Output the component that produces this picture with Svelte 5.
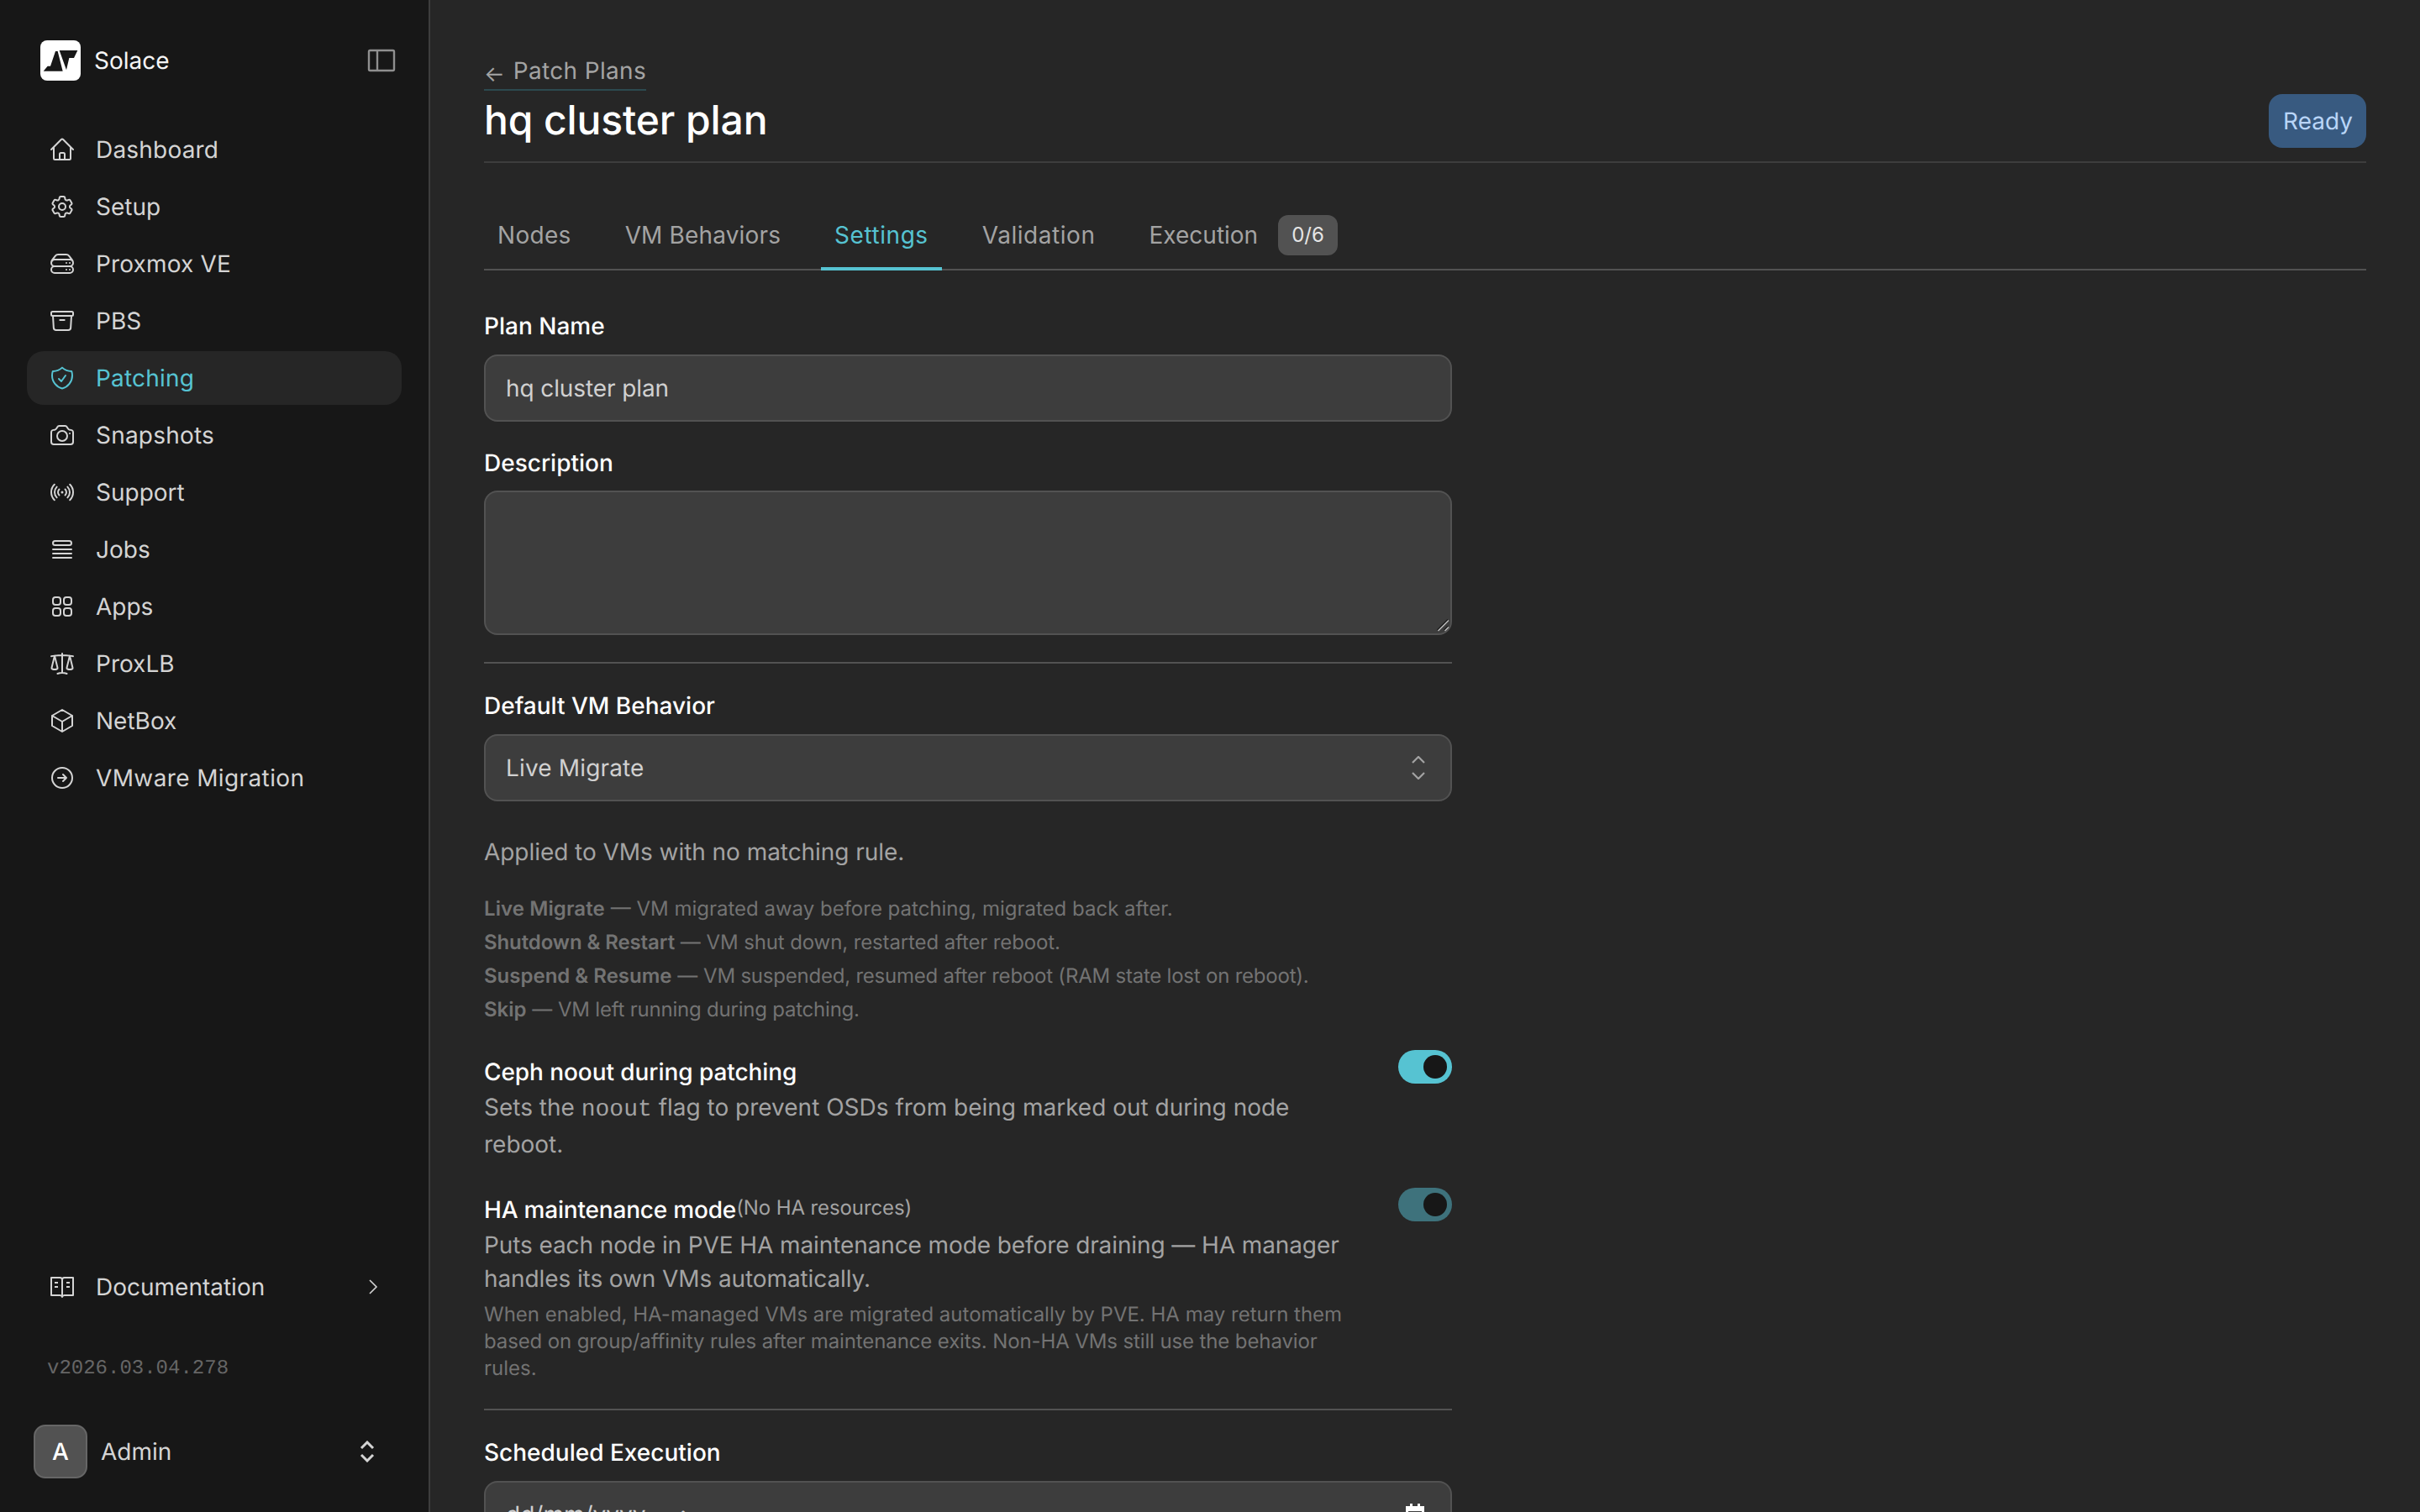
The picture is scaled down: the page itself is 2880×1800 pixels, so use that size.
<script>
  const nav = [
    { label: 'Dashboard', ls: 0.2, d: ['m2.25 12 8.954-8.955c.44-.439 1.152-.439 1.591 0L21.75 12M4.5 9.75v10.125c0 .621.504 1.125 1.125 1.125H9.75v-4.875c0-.621.504-1.125 1.125-1.125h2.25c.621 0 1.125.504 1.125 1.125V21h4.125c.621 0 1.125-.504 1.125-1.125V9.75M8.25 21h8.25'] },
    { label: 'Setup', ls: 0, d: ['M9.594 3.94c.09-.542.56-.94 1.11-.94h2.593c.55 0 1.02.398 1.11.94l.213 1.281c.063.374.313.686.645.87.074.04.147.083.22.127.325.196.72.257 1.075.124l1.217-.456a1.125 1.125 0 0 1 1.37.49l1.296 2.247a1.125 1.125 0 0 1-.26 1.431l-1.003.827c-.293.241-.438.613-.43.992a7.723 7.723 0 0 1 0 .255c-.008.378.137.75.43.991l1.004.827c.424.35.534.955.26 1.43l-1.298 2.247a1.125 1.125 0 0 1-1.369.491l-1.217-.456c-.355-.133-.75-.072-1.076.124a6.47 6.47 0 0 1-.22.128c-.331.183-.581.495-.644.869l-.213 1.281c-.09.543-.56.94-1.11.94h-2.594c-.55 0-1.019-.398-1.11-.94l-.213-1.281c-.062-.374-.312-.686-.644-.87a6.52 6.52 0 0 1-.22-.127c-.325-.196-.72-.257-1.076-.124l-1.217.456a1.125 1.125 0 0 1-1.369-.49l-1.297-2.247a1.125 1.125 0 0 1 .26-1.431l1.004-.827c.292-.24.437-.613.43-.991a6.932 6.932 0 0 1 0-.255c.007-.38-.138-.751-.43-.992l-1.004-.827a1.125 1.125 0 0 1-.26-1.43l1.297-2.247a1.125 1.125 0 0 1 1.37-.491l1.216.456c.356.133.751.072 1.076-.124.072-.044.146-.086.22-.128.332-.183.582-.495.644-.869l.214-1.28Z', 'M15 12a3 3 0 1 1-6 0 3 3 0 0 1 6 0Z'] },
    { label: 'Proxmox VE', ls: 0.15, d: ['M5.25 14.25h13.5m-13.5 0a3 3 0 0 1-3-3m3 3a3 3 0 1 0 0 6h13.5a3 3 0 1 0 0-6m-16.5-3a3 3 0 0 1 3-3h13.5a3 3 0 0 1 3 3m-19.5 0a4.5 4.5 0 0 1 .9-2.7L5.737 5.1a3.375 3.375 0 0 1 2.7-1.35h7.126c1.062 0 2.062.5 2.7 1.35l2.587 3.45a4.5 4.5 0 0 1 .9 2.7m0 0a3 3 0 0 1-3 3m0 3h.008v.008h-.008v-.008Zm0-6h.008v.008h-.008v-.008Zm-3 6h.008v.008h-.008v-.008Zm0-6h.008v.008h-.008v-.008Z'] },
    { label: 'PBS', ls: 0, d: ['m20.25 7.5-.625 10.632a2.25 2.25 0 0 1-2.247 2.118H6.622a2.25 2.25 0 0 1-2.247-2.118L3.75 7.5M10 11.25h4M3.375 7.5h17.25c.621 0 1.125-.504 1.125-1.125v-1.5c0-.621-.504-1.125-1.125-1.125H3.375c-.621 0-1.125.504-1.125 1.125v1.5c0 .621.504 1.125 1.125 1.125Z'] },
    { label: 'Patching', ls: 0.2, active: true, d: ['M9 12.75 11.25 15 15 9.75m-3-7.036A11.959 11.959 0 0 1 3.598 6 11.99 11.99 0 0 0 3 9.749c0 5.592 3.824 10.29 9 11.623 5.176-1.332 9-6.03 9-11.622 0-1.31-.21-2.571-.598-3.751h-.152c-3.196 0-6.1-1.248-8.25-3.285Z'] },
    { label: 'Snapshots', ls: 0.2, d: ['M6.827 6.175A2.31 2.31 0 0 1 5.186 7.23c-.38.054-.757.112-1.134.175C2.999 7.58 2.25 8.507 2.25 9.574V18a2.25 2.25 0 0 0 2.25 2.25h15A2.25 2.25 0 0 0 21.75 18V9.574c0-1.067-.75-1.994-1.802-2.169a47.865 47.865 0 0 0-1.134-.175 2.31 2.31 0 0 1-1.64-1.055l-.822-1.316a2.192 2.192 0 0 0-1.736-1.039 48.774 48.774 0 0 0-5.232 0 2.192 2.192 0 0 0-1.736 1.039l-.821 1.316Z', 'M16.5 12.75a4.5 4.5 0 1 1-9 0 4.5 4.5 0 0 1 9 0ZM18.75 10.5h.008v.008h-.008V10.5Z'] },
    { label: 'Support', ls: 0, d: ['M9.348 14.652a3.75 3.75 0 0 1 0-5.304m5.304 0a3.75 3.75 0 0 1 0 5.304m-7.425 2.121a6.75 6.75 0 0 1 0-9.546m9.546 0a6.75 6.75 0 0 1 0 9.546M5.106 18.894c-3.808-3.807-3.808-9.98 0-13.788m13.788 0c3.808 3.807 3.808 9.98 0 13.788M12 12h.008v.008H12V12Zm.375 0a.375.375 0 1 1-.75 0 .375.375 0 0 1 .75 0Z'] },
    { label: 'Jobs', ls: 0, d: ['M3.75 12h16.5m-16.5 3.75h16.5m-16.5 3.75h16.5M5.625 4.5h12.75a1.875 1.875 0 0 1 0 3.75H5.625a1.875 1.875 0 0 1 0-3.75Z'] },
    { label: 'Apps', ls: 0, d: ['M3.75 6A2.25 2.25 0 0 1 6 3.75h2.25A2.25 2.25 0 0 1 10.5 6v2.25a2.25 2.25 0 0 1-2.25 2.25H6a2.25 2.25 0 0 1-2.25-2.25V6ZM3.75 15.75A2.25 2.25 0 0 1 6 13.5h2.25a2.25 2.25 0 0 1 2.25 2.25V18a2.25 2.25 0 0 1-2.25 2.25H6A2.25 2.25 0 0 1 3.75 18v-2.25ZM13.5 6a2.25 2.25 0 0 1 2.25-2.25H18A2.25 2.25 0 0 1 20.25 6v2.25A2.25 2.25 0 0 1 18 10.5h-2.25a2.25 2.25 0 0 1-2.25-2.25V6ZM13.5 15.75a2.25 2.25 0 0 1 2.25-2.25H18a2.25 2.25 0 0 1 2.25 2.25V18A2.25 2.25 0 0 1 18 20.25h-2.25A2.25 2.25 0 0 1 13.5 18v-2.25Z'] },
    { label: 'ProxLB', ls: 0, d: ['M12 3v17.25m0 0c-1.472 0-2.882.265-4.185.75M12 20.25c1.472 0 2.882.265 4.185.75M18.75 4.97A48.416 48.416 0 0 0 12 4.5c-2.291 0-4.545.16-6.75.47m13.5 0c1.01.143 2.01.317 3 .52m-3-.52 2.62 10.726c.122.499-.106 1.028-.589 1.202a5.988 5.988 0 0 1-2.031.352 5.988 5.988 0 0 1-2.031-.352c-.483-.174-.711-.703-.59-1.202L18.75 4.971Zm-16.5.52c.99-.203 1.99-.377 3-.52m0 0 2.62 10.726c.122.499-.106 1.028-.589 1.202a5.989 5.989 0 0 1-2.031.352 5.989 5.989 0 0 1-2.031-.352c-.483-.174-.711-.703-.59-1.202L5.25 4.971Z'] },
    { label: 'NetBox', ls: 0, d: ['m21 7.5-9-5.25L3 7.5m18 0-9 5.25m9-5.25v9l-9 5.25M3 7.5l9 5.25M3 7.5v9l9 5.25m0-9v9'] },
    { label: 'VMware Migration', ls: 0.38, d: ['m12.75 15 3-3m0 0-3-3m3 3h-7.5M21 12a9 9 0 1 1-18 0 9 9 0 0 1 18 0Z'] }
  ];
  const tabs = [
    { t: 'Nodes', ls: 0.3 },
    { t: 'VM Behaviors', ls: 0.15 },
    { t: 'Settings', ls: 0.55 },
    { t: 'Validation', ls: 0.55 },
    { t: 'Execution', ls: 0 }
  ];
  const legend = [
    ['Live Migrate', 0.1, 'VM migrated away before patching, migrated back after.', 0],
    ['Shutdown & Restart', -0.1, 'VM shut down, restarted after reboot.', -0.12],
    ['Suspend & Resume', 0, 'VM suspended, resumed after reboot (RAM state lost on reboot).', -0.22],
    ['Skip', 0, 'VM left running during patching.', -0.22]
  ];
</script>

<div class="shell">
  <aside class="sidebar">
    <div class="brand">
      <svg class="logo" viewBox="144 144 144 144" aria-hidden="true">
        <rect x="144" y="144" width="144" height="144" rx="24" fill="#fff" />
        <path d="M155 254 L170 236 L180 236 L198 183 L206 183 L224 254 Z" fill="#171717" />
        <path d="M212 180 L277 180 L264 207 L247 207 L237 250 Z" fill="#171717" />
      </svg>
      <span class="brand-name">Solace</span>
      <svg class="panel" viewBox="0 0 36 32" fill="none" stroke="#8f8f8f" stroke-width="2.4" aria-hidden="true">
        <rect x="3" y="4" width="30" height="24" rx="1.5" />
        <path d="M13 4v24" />
      </svg>
    </div>

    <nav class="nav">
      {#each nav as item}
        <a class="nav-item" class:active={item.active} href="#top">
          <svg class="icon" viewBox="0 0 24 24" fill="none" stroke="currentColor" stroke-width="1.5" stroke-linecap="round" stroke-linejoin="round" aria-hidden="true">
            {#each item.d as d}<path {d} />{/each}
          </svg>
          <span style:letter-spacing="{item.ls}px">{item.label}</span>
        </a>
      {/each}
    </nav>

    <a class="nav-item docs" href="#top">
      <svg class="icon" viewBox="0 0 32 32" fill="none" stroke="currentColor" stroke-width="2" stroke-linejoin="round" aria-hidden="true">
        <path d="M3 5h10.500c1.500 0 2.500 1 2.500 2.500C16 6 17 5 18.500 5H29v21H18.500c-1 0-2 .6-2.500 2-.5-1.400-1.500-2-2.500-2H3Z" />
        <path d="M16 7.500V28M7 11h4M7 16h4M21 11h4M21 16h4" />
      </svg>
      <span>Documentation</span>
      <svg class="chev" viewBox="0 0 12 20" fill="none" stroke="currentColor" stroke-width="1.6" aria-hidden="true"><path d="m2 2 8 8-8 8" /></svg>
    </a>

    <div class="version">v2026.03.04.278</div>

    <div class="user">
      <div class="avatar">A</div>
      <span class="user-name">Admin</span>
      <svg class="updown" viewBox="0 0 18 26" fill="none" stroke="currentColor" stroke-width="3" aria-hidden="true"><path d="m2 9 7-7 7 7M2 17l7 7 7-7" /></svg>
    </div>
  </aside>

  <main class="main">
    <header class="head">
      <div>
        <a class="back" href="#top"><span class="arrow">←</span><span class="back-text">Patch Plans</span></a>
        <h1>hq cluster plan</h1>
      </div>
      <span class="status">Ready</span>
    </header>

    <div class="tabs">
      {#each tabs as tab}
        <button class="tab" class:on={tab.t === 'Settings'}>
          <span style:letter-spacing="{tab.ls}px">{tab.t}</span>
          {#if tab.t === 'Execution'}<span class="count">0/6</span>{/if}
        </button>
      {/each}
    </div>

    <form class="form">
      <label class="label first" for="pn">Plan Name</label>
      <input id="pn" class="field plan" value="hq cluster plan" />

      <label class="label desc-label" for="ds">Description</label>
      <div class="area-wrap">
        <textarea id="ds" class="field area"></textarea>
        <svg class="grip" viewBox="0 0 16 16" aria-hidden="true" fill="none" stroke-width="1.500">
          <path d="M0.500 13 L13 0.500" stroke="#1c1c1c" />
          <path d="M1.500 14 L14 1.500" stroke="#bdbdbd" />
          <path d="M8.500 13 L13 8.500" stroke="#1c1c1c" />
          <path d="M9.500 14 L14 9.500" stroke="#bdbdbd" />
        </svg>
      </div>

      <hr class="rule one" />

      <div class="label">Default VM Behavior</div>
      <div class="field select">
        <span class="sel-text">Live Migrate</span>
        <svg viewBox="0 0 18 28" width="18" height="28" fill="none" stroke="#a3a3a3" stroke-width="2.200" aria-hidden="true"><path d="m2 8 7-7 7 7M2 20l7 7 7-7" /></svg>
      </div>

      <p class="hint">Applied to VMs with no matching rule.</p>

      <div class="legend">
        {#each legend as [k, kls, v, vls]}
          <div><strong style:letter-spacing="{kls}px">{k}</strong> — <span style:letter-spacing="{vls}px">{v}</span></div>
        {/each}
      </div>

      <div class="toggle-row ceph">
        <div class="toggle-text">
          <div class="toggle-title ceph-title">Ceph noout during patching</div>
          <p class="toggle-desc">Sets the <code>noout</code> flag to prevent OSDs from being marked out during node reboot.</p>
        </div>
        <span class="switch"></span>
      </div>

      <div class="toggle-row ha">
        <div class="toggle-text">
          <div class="toggle-title ha-title"><span class="ha-name">HA maintenance mode</span><span class="note">(No HA resources)</span></div>
          <p class="toggle-desc">Puts each node in PVE HA maintenance mode before draining — HA manager handles its own VMs automatically.</p>
          <p class="fine">When enabled, HA-managed VMs are migrated automatically by PVE. HA may return them <span class="tight">based on group/affinity rules after maintenance exits. Non-HA VMs still use the behavior</span> rules.</p>
        </div>
        <span class="switch dim"></span>
      </div>

      <hr class="rule two" />

      <div class="label">Scheduled Execution</div>
      <div class="field date">
        <span>dd/mm/yyyy, --:--</span>
        <svg viewBox="0 0 22 26" width="22" height="28" fill="#fff" aria-hidden="true"><path d="M5 0h3v3h6V0h3v3h5v23H0V3h5Zm-2 9v14h16V9Z" /></svg>
      </div>
    </form>
  </main>
</div>

<style>
  :global(body) {
    margin: 0;
    background: #262626;
  }
  .shell {
    display: flex;
    height: 1800px;
    overflow: hidden;
    font-family: Inter, "Noto Sans", sans-serif;
    font-size: 28px;
    line-height: 40px;
    color: #e5e5e5;
    text-rendering: geometricPrecision;
  }
  .sidebar {
    box-sizing: border-box;
    flex: 0 0 512px;
    height: 1800px;
    display: flex;
    flex-direction: column;
    padding: 48px 32px 40px;
    background: #171717;
    border-right: 2px solid #3d3d3d;
  }
  .brand {
    display: flex;
    align-items: center;
    gap: 16px;
    padding-left: 16px;
    height: 48px;
    color: #f5f5f5;
  }
  .logo {
    width: 48px;
    height: 48px;
    flex: none;
  }
  .brand-name {
    flex: 1;
  }
  .panel {
    width: 36px;
    height: 32px;
    margin-right: 6px;
  }
  .nav {
    display: flex;
    flex-direction: column;
    gap: 4px;
    margin-top: 50px;
  }
  .nav-item {
    display: flex;
    align-items: center;
    gap: 24px;
    height: 64px;
    padding-left: 26px;
    border-radius: 20px;
    color: #d4d4d4;
    text-decoration: none;
  }
  .nav-item.active {
    background: #262626;
    color: #56c3d2;
  }
  .icon {
    width: 32px;
    height: 32px;
    flex: none;
  }
  .docs {
    margin-top: auto;
    flex: none;
  }
  .docs span {
    flex: 1;
  }
  .chev {
    width: 12px;
    height: 20px;
    margin-right: 28px;
  }
  .version {
    margin-top: 50px;
    padding-left: 24px;
    font-family: "Liberation Mono", monospace;
    font-size: 24px;
    line-height: 32px;
    color: #666;
  }
  .user {
    display: flex;
    align-items: center;
    gap: 16px;
    margin-top: 50px;
    padding-left: 8px;
    color: #d4d4d4;
  }
  .avatar {
    box-sizing: border-box;
    width: 64px;
    height: 64px;
    display: grid;
    place-items: center;
    border: 2px solid #666;
    border-radius: 14px;
    background: #525252;
    color: #fff;
    font-weight: 500;
  }
  .user-name {
    flex: 1;
  }
  .updown {
    width: 18px;
    height: 26px;
    margin-right: 32px;
  }
  .main {
    flex: 1;
    min-width: 0;
    box-sizing: border-box;
    padding: 64px 64px 0;
    background: #262626;
  }
  .head {
    display: flex;
    justify-content: space-between;
    align-items: flex-end;
    padding-bottom: 16px;
    border-bottom: 2px solid #3d3d3d;
  }
  .back {
    display: table;
    padding-bottom: 2px;
    border-bottom: 2px solid #2c4a50;
    color: #a3a3a3;
    text-decoration: none;
  }
  .back-text {
    letter-spacing: 0.33px;
  }
  .arrow {
    display: inline-block;
    margin-right: 10px;
    font-size: 26px;
    line-height: 0;
    vertical-align: -3px;
  }
  h1 {
    margin: 3px 0 0;
    font-size: 48px;
    line-height: 64px;
    padding-bottom: 1px;
    font-weight: 500;
    letter-spacing: -0.12px;
    color: #fff;
  }
  .status {
    display: block;
    height: 64px;
    padding: 0 16px 0 17px;
    line-height: 64px;
    border-radius: 16px;
    background: #385a80;
    color: #b9d5f7;
  }
  .tabs {
    display: flex;
    gap: 32px;
    margin-top: 48px;
    border-bottom: 2px solid #525252;
  }
  .tab {
    display: inline-flex;
    align-items: center;
    gap: 24px;
    box-sizing: content-box;
    height: 48px;
    margin-bottom: -2px;
    padding: 14px 16px;
    border: 0;
    border-bottom: 4px solid transparent;
    background: none;
    font: inherit;
    color: #a3a3a3;
  }
  .tab.on {
    color: #56c3d2;
    border-bottom-color: #56c3d2;
  }
  .count {
    display: block;
    height: 48px;
    padding: 0 16px;
    line-height: 48px;
    font-size: 24px;
    border-radius: 12px;
    background: #525252;
    color: #e5e5e5;
  }
  .form {
    width: 1152px;
  }
  .label {
    display: block;
    margin-bottom: 14px;
    font-weight: 500;
    color: #fff;
  }
  .first {
    margin-top: 46px;
  }
  .desc-label {
    margin-top: 29px;
    margin-bottom: 13px;
  }
  .field {
    display: block;
    box-sizing: border-box;
    width: 100%;
    height: 80px;
    padding: 0 24px;
    border: 2px solid #525252;
    border-radius: 16px;
    background: #3d3d3d;
    font: inherit;
    text-rendering: geometricPrecision;
    color: #d0d0d0;
    outline: 0;
  }
  .plan {
    letter-spacing: -0.1px;
  }
  .sel-text {
    letter-spacing: 0.15px;
  }
  .area-wrap {
    position: relative;
  }
  .area {
    height: 172px;
    padding: 16px 24px;
    resize: none;
  }
  .grip {
    position: absolute;
    right: 2px;
    bottom: 3px;
    width: 16px;
    height: 16px;
  }
  .rule {
    height: 2px;
    margin: 0;
    border: 0;
    background: #525252;
  }
  .one {
    margin: 32px 0 30px;
  }
  .two {
    margin: 32px 0 30px;
  }
  .select,
  .date {
    display: flex;
    justify-content: space-between;
    align-items: center;
  }
  .select {
    padding-right: 29px;
  }
  .date {
    padding-right: 31px;
  }
  .hint {
    margin: 40px 0 0;
    letter-spacing: -0.05px;
    color: #a3a3a3;
  }
  .legend {
    margin-top: 28px;
    font-size: 24px;
    color: #737373;
  }
  .legend strong {
    font-weight: 600;
  }
  .toggle-row {
    display: flex;
    justify-content: space-between;
    align-items: flex-start;
  }
  .ceph {
    margin-top: 28px;
  }
  .ha {
    margin-top: 32px;
  }
  .toggle-text {
    width: 1040px;
  }
  .toggle-title {
    padding-top: 6px;
    font-weight: 500;
    color: #fff;
  }
  .ceph-title {
    letter-spacing: -0.07px;
  }
  .ha-title {
    display: flex;
  }
  .ha-name {
    letter-spacing: -0.19px;
  }
  .note {
    font-size: 24px;
    line-height: 36px;
    font-weight: 400;
    letter-spacing: -0.1px;
    color: #a3a3a3;
  }
  .toggle-desc {
    margin: 2px 0 0;
    color: #a3a3a3;
  }
  .ha .toggle-desc {
    letter-spacing: -0.1px;
  }
  code {
    font-family: "Liberation Mono", monospace;
    font-size: 28px;
  }
  .fine {
    margin: 7px 0 0;
    font-size: 24px;
    line-height: 32px;
    color: #737373;
  }
  .tight {
    letter-spacing: -0.12px;
  }
  .switch {
    position: relative;
    display: block;
    flex: none;
    width: 64px;
    height: 40px;
    border-radius: 20px;
    background: #56c3d2;
  }
  .switch::after {
    content: "";
    position: absolute;
    top: 6px;
    right: 6px;
    width: 28px;
    height: 28px;
    border-radius: 50%;
    background: #171717;
  }
  .switch.dim {
    background: #3e727c;
  }
</style>
